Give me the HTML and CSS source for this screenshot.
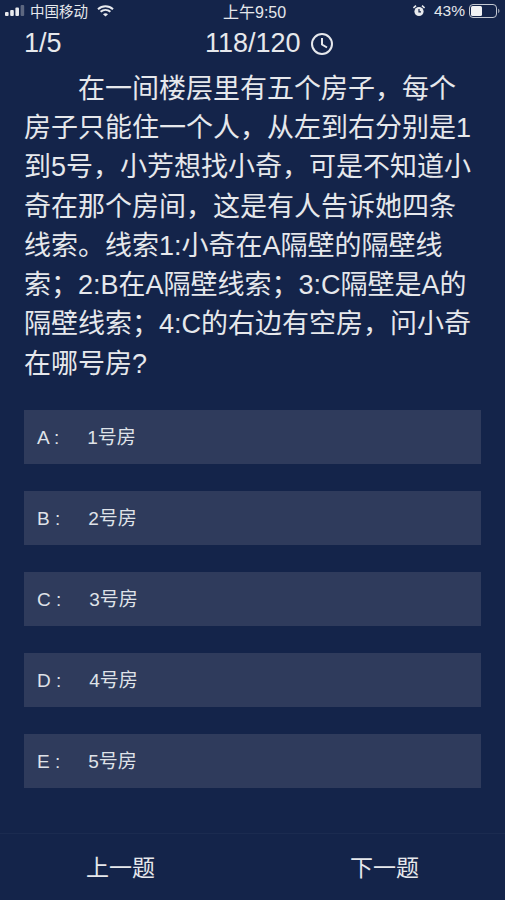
FILE: index.html
```html
<!DOCTYPE html>
<html lang="zh-CN">
<head>
    <meta charset="UTF-8">
    <meta name="viewport" content="width=device-width, initial-scale=1.0">
    <title>答题</title>
    <link rel="stylesheet" href="styles.css">
</head>
<body>

    <div class="pantalla">
        <div class="estado">
            <div class="estado-izq">
                <svg class="senal" width="20" height="11" viewBox="0 0 20 11">
                    <rect x="0" y="7" width="3.6" height="4" rx="1" fill="#e8eaee"/>
                    <rect x="5.2" y="5" width="3.6" height="6" rx="1" fill="#e8eaee"/>
                    <rect x="10.4" y="2.5" width="3.6" height="8.5" rx="1" fill="#e8eaee"/>
                    <rect x="15.6" y="0" width="3.6" height="11" rx="1" fill="#5d6780"/>
                </svg>
                <span>中国移动</span>
                <svg class="wifi" width="17" height="12" viewBox="0 0 17 12">
                    <path d="M1 4.2C5.2 .4 11.8 .4 16 4.2" fill="none" stroke="#e8eaee" stroke-width="2"/>
                    <path d="M3.6 6.8c2.9-2.5 6.9-2.5 9.8 0" fill="none" stroke="#e8eaee" stroke-width="2"/>
                    <path d="M6 9.2c1.5-1.2 3.5-1.2 5 0L8.5 11.6z" fill="#e8eaee"/>
                </svg>
            </div>
            <div class="estado-centro">上午9:50</div>
            <div class="estado-der">
                <svg class="alarma" width="12" height="12" viewBox="0 0 12 12">
                    <circle cx="6" cy="6.5" r="4.6" fill="#e8eaee"/>
                    <path d="M6 4v2.8h2" fill="none" stroke="#14244a" stroke-width="1.2"/>
                    <path d="M.4 3 3 .6M11.6 3 9 .6" stroke="#e8eaee" stroke-width="1.6"/>
                </svg>
                <span>43%</span>
                <svg class="bateria" width="31" height="14" viewBox="0 0 31 14">
                    <rect x=".5" y=".5" width="27" height="13" rx="3.5" fill="none" stroke="#c3c8d2"/>
                    <rect x="2" y="2" width="11" height="10" rx="1.5" fill="#f2f3f5"/>
                    <path d="M29 4.8c1 .3 1.5 1.2 1.5 2.2s-.5 1.9-1.5 2.2z" fill="#8f97a8"/>
                </svg>
            </div>
        </div>

        <div class="cabecera">
            <span class="progreso">1/5</span>
            <div class="tiempo">
                <span>118/120</span>
                <svg width="24" height="24" viewBox="0 0 24 24">
                    <circle cx="12" cy="12" r="10" fill="none" stroke="#e6e8ec" stroke-width="2"/>
                    <path d="M12 6v6.5l5 3" fill="none" stroke="#e6e8ec" stroke-width="2"/>
                </svg>
            </div>
        </div>

        <div class="pregunta">在一间楼层里有五个房子，每个房子只能住一个人，从左到右分别是1到5号，小芳想找小奇，可是不知道小奇在那个房间，这是有人告诉她四条线索。线索1:小奇在A隔壁的隔壁线索；2:B在A隔壁线索；3:C隔壁是A的隔壁线索；4:C的右边有空房，问小奇在哪号房?</div>

        <div class="opciones">
            <div class="opcion"><span>A :</span><span>1号房</span></div>
            <div class="opcion"><span>B :</span><span>2号房</span></div>
            <div class="opcion"><span>C :</span><span>3号房</span></div>
            <div class="opcion"><span>D :</span><span>4号房</span></div>
            <div class="opcion"><span>E :</span><span>5号房</span></div>
        </div>

        <div class="pie">
            <div class="boton">上一题</div>
            <div class="boton">下一题</div>
        </div>
    </div>

</body>
</html>
```

FILE: styles.css
```css
body {
    margin: 0;
    background-color: #14244a;
    font-family: "Liberation Sans", "Noto Sans CJK SC", sans-serif;
    color: #e6e8ec;
}

.pantalla {
    height: 900px;
    display: flex;
    flex-direction: column;
    overflow: hidden;
}

.estado {
    height: 22px;
    display: flex;
    align-items: center;
    justify-content: space-between;
    padding: 0 5px;
    font-size: 14.5px;
    position: relative;
}

.estado-izq, .estado-der {
    display: flex;
    align-items: center;
}

.estado-izq span {
    margin-left: 5px;
}

.wifi {
    margin-left: 9px;
}

.estado-centro {
    position: absolute;
    left: 223px;
    font-size: 16px;
}

.estado-der span {
    margin: 0 4px 0 9px;
    font-size: 15.5px;
}

.cabecera {
    height: 44px;
    padding: 0 24px;
    display: flex;
    align-items: center;
    font-size: 27px;
}

.progreso {
    width: 181px;
}

.tiempo {
    display: flex;
    align-items: center;
    gap: 9px;
}

.pregunta {
    padding: 0 24px;
    margin-top: 4px;
    font-size: 27px;
    line-height: 39.25px;
    text-indent: 54px;
    height: 319px;
}

.opciones {
    margin: 22px 24px 0;
    display: flex;
    flex-direction: column;
    gap: 27px;
}

.opcion {
    height: 54px;
    background-color: #2f3b5c;
    display: flex;
    align-items: baseline;
    gap: 28px;
    padding-left: 13px;
    font-size: 19px;
    line-height: 56px;
    color: #dfe2e8;
}

.pie {
    margin-top: 45px;
    height: 66px;
    border-top: 1px solid #1b2b50;
    display: flex;
    justify-content: space-between;
    align-items: center;
}

.boton {
    width: 241px;
    text-align: center;
    font-size: 23px;
    padding-bottom: 2px;
}
```
